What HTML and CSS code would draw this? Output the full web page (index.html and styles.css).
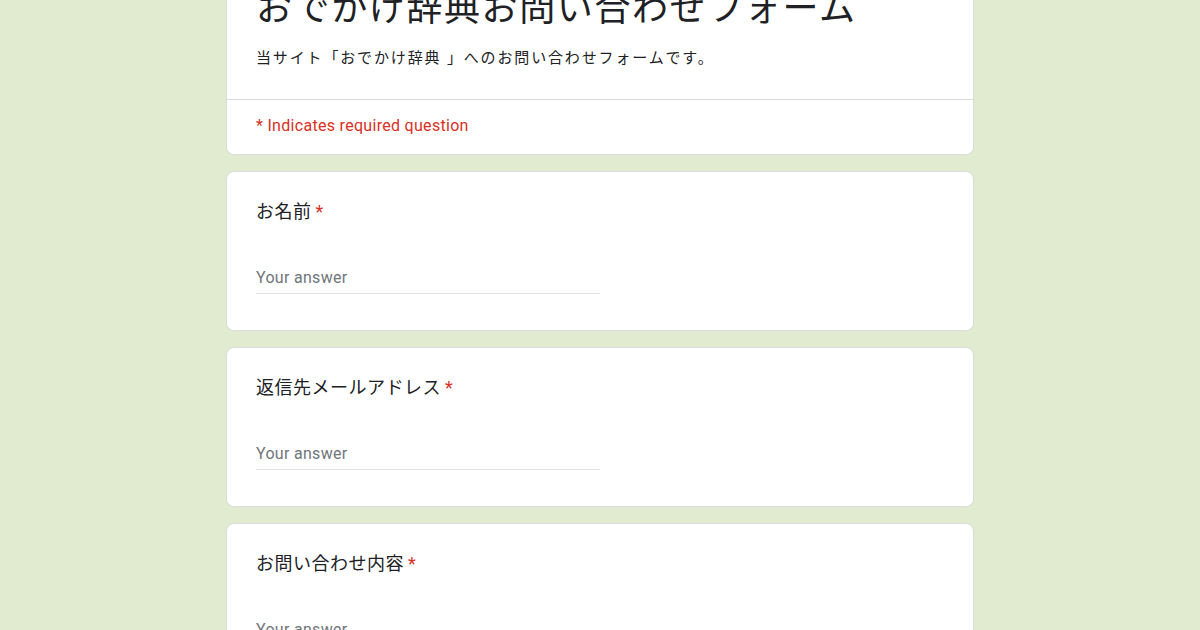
FILE: index.html
```html
<!DOCTYPE html>
<html lang="ja">
<head>
<meta charset="utf-8">
<link rel="stylesheet" href="styles.css">
</head>
<body>
<div class="page">
  <div class="card header">
    <div class="head-main">
      <div class="title">おでかけ辞典お問い合わせフォーム</div>
      <div class="desc">当サイト「おでかけ辞典 」へのお問い合わせフォームです。</div>
    </div>
    <div class="req-note">* Indicates required question</div>
  </div>
  <div class="card q">
    <div class="label">お名前<span class="star">*</span></div>
    <div class="answer">Your answer</div>
  </div>
  <div class="card q">
    <div class="label">返信先メールアドレス<span class="star">*</span></div>
    <div class="answer">Your answer</div>
  </div>
  <div class="card q">
    <div class="label">お問い合わせ内容<span class="star">*</span></div>
    <div class="answer">Your answer</div>
  </div>
</div>
</body>
</html>
```
FILE: styles.css
```css
html, body {
  margin: 0;
  padding: 0;
  background: #e0ebd0;
  overflow: hidden;
  height: 630px;
}
body {
  font-family: Roboto, "Noto Sans CJK JP", sans-serif;
  color: #202124;
}
.page {
  width: 748px;
  margin: -40px auto 0;
  display: flex;
  flex-direction: column;
  gap: 16px;
}
.card {
  background: #fff;
  border: 1px solid #dadce0;
  border-radius: 8px;
  box-sizing: border-box;
}
.head-main {
  padding: 24px 29px 30px;
  border-bottom: 1px solid #dadce0;
}
.title {
  font-size: 36px;
  line-height: 48px;
  letter-spacing: 1.6px;
}
.desc {
  margin-top: 14px;
  font-size: 15px;
  line-height: 22px;
  letter-spacing: 1.85px;
}
.req-note {
  padding: 14px 29px 16px;
  font-size: 16px;
  line-height: 24px;
  letter-spacing: 0.3px;
  color: #d93025;
}
.q {
  height: 160px;
  padding: 26px 29px 0;
}
.label {
  font-size: 18px;
  line-height: 28px;
  letter-spacing: 0.5px;
}
.star {
  color: #d93025;
  margin-left: 4px;
}
.answer {
  margin-top: 40px;
  width: 344px;
  font-size: 16px;
  line-height: 24px;
  color: #70757a;
  letter-spacing: 0.3px;
  padding-bottom: 3px;
  border-bottom: 1px solid #e0e0e0;
}
```
